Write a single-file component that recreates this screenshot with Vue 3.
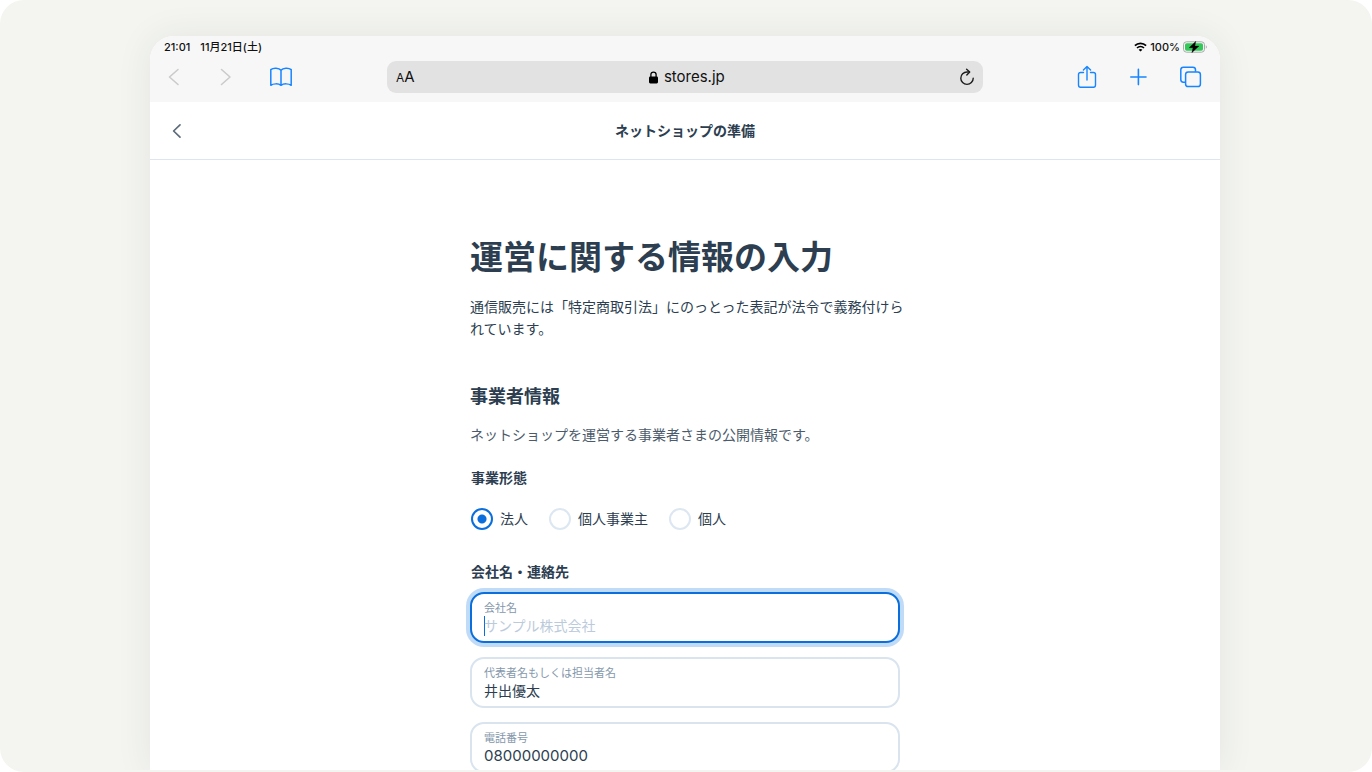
<script setup>
import { ref } from 'vue'

const businessType = ref('corporation')
const businessTypes = [
  { value: 'corporation', label: '法人' },
  { value: 'sole', label: '個人事業主' },
  { value: 'individual', label: '個人' },
]

const activeField = ref('company')
const fields = ref([
  { id: 'company', label: '会社名', value: '', placeholder: 'サンプル株式会社' },
  { id: 'person', label: '代表者名もしくは担当者名', value: '井出優太', placeholder: '' },
  { id: 'phone', label: '電話番号', value: '08000000000', placeholder: '' },
])
</script>

<template>
  <div class="canvas">
    <div class="stage">
      <div class="device">
        <header class="browser">
          <div class="status">
            <div class="status-group">
              <span>21:01</span>
              <span>11月21日(土)</span>
            </div>
            <div class="status-right">
              <svg width="13" height="10" viewBox="0 0 13 10" fill="none" stroke="#000" stroke-width="1.7">
                <path d="M0.9 3.7C4 0.5 9 0.5 12.1 3.7" />
                <path d="M3 6C5 4.1 8 4.1 10 6" />
                <path d="M6.5 9.6L4.6 7.7C5.6 6.8 7.4 6.8 8.4 7.7Z" fill="#000" stroke="none" />
              </svg>
              <span>100%</span>
              <svg width="25" height="12" viewBox="0 0 25 12">
                <rect x="0.5" y="0.8" width="21" height="10.4" rx="3" fill="#f7f7f7" stroke="#a9a9a9" />
                <rect x="2" y="2.3" width="18" height="7.4" rx="1.6" fill="#34c759" />
                <path d="M22.8 4.2C24.2 4.8 24.2 7.2 22.8 7.8Z" fill="#a9a9a9" />
                <path d="M12.8 0.2L6.2 6.7H10L8.8 11.8L16 5.1H11.9Z" fill="#000" stroke="#000" stroke-width="0.3" />
              </svg>
            </div>
          </div>
          <div class="toolbar">
            <nav class="tools">
              <button class="tool" type="button" aria-label="戻る">
                <svg width="12" height="18" viewBox="0 0 12 18" fill="none" stroke="#cbcbcc" stroke-width="1.6" stroke-linecap="round" stroke-linejoin="round"><path d="M10 1.5L1.5 9L10 16.5" /></svg>
              </button>
              <button class="tool" type="button" aria-label="進む">
                <svg width="12" height="18" viewBox="0 0 12 18" fill="none" stroke="#cbcbcc" stroke-width="1.6" stroke-linecap="round" stroke-linejoin="round"><path d="M1.5 1.5L10 9L1.5 16.5" /></svg>
              </button>
              <button class="tool tool-wide" type="button" aria-label="ブックマーク">
                <svg width="24" height="20" viewBox="0 0 24 20" fill="none" stroke="#1785ff" stroke-width="1.5" stroke-linecap="round" stroke-linejoin="round">
                  <path d="M12 18.3V3.2C10 0.6 4.2 0.6 1.8 2.6V18.3C4.2 16.5 9.4 16.3 12 18.3C14.6 16.3 19.8 16.5 22.2 18.3V2.6C19.8 0.6 14 0.6 12 3.2" />
                </svg>
              </button>
            </nav>
            <div class="address">
              <button class="text-size" type="button" aria-label="表示サイズ"><span class="small-a">A</span>A</button>
              <div class="host">
                <svg width="9" height="13" viewBox="0 0 9 13">
                  <rect x="0" y="5.4" width="9" height="7" rx="1.3" fill="#000" />
                  <path d="M1.9 6V3.6C1.9 0.4 7.1 0.4 7.1 3.6V6" fill="none" stroke="#000" stroke-width="1.3" />
                </svg>
                <span>stores.jp</span>
              </div>
              <button class="reload" type="button" aria-label="再読み込み">
                <svg width="16" height="18" viewBox="0 0 16 18" fill="none" stroke="#1c1c1c" stroke-width="1.4" stroke-linecap="round" stroke-linejoin="round">
                  <path d="M14.2 10.2A6.2 6.2 0 1 1 8 4H10.2" />
                  <path d="M7.6 1.2L10.7 4L7.8 7" />
                </svg>
              </button>
            </div>
            <nav class="tools">
              <button class="tool" type="button" aria-label="共有">
                <svg width="20" height="24" viewBox="0 0 20 24" fill="none" stroke="#1785ff" stroke-width="1.4" stroke-linecap="round" stroke-linejoin="round">
                  <path d="M6.5 7.5H3.6Q1.5 7.5 1.5 9.6V20Q1.5 22.2 3.6 22.2H16.4Q18.5 22.2 18.5 20V9.6Q18.5 7.5 16.4 7.5H13.5" />
                  <path d="M10 15V1.8M6.4 5L10 1.6L13.6 5" />
                </svg>
              </button>
              <button class="tool" type="button" aria-label="新規タブ">
                <svg width="18" height="18" viewBox="0 0 18 18" fill="none" stroke="#1785ff" stroke-width="1.6" stroke-linecap="round"><path d="M8.4 1.4V16.6M0.8 9H16" /></svg>
              </button>
              <button class="tool" type="button" aria-label="タブ一覧">
                <svg width="22" height="22" viewBox="0 0 22 22" fill="none" stroke="#1785ff" stroke-width="1.5" stroke-linejoin="round">
                  <rect x="5.6" y="6" width="14.8" height="14.6" rx="2.6" />
                  <path d="M5.4 16.2H3.4Q0.8 16.2 0.8 13.6V3.8Q0.8 1.2 3.4 1.2H12.9Q15.5 1.2 15.5 3.8V5.8" />
                </svg>
              </button>
            </nav>
          </div>
        </header>

        <div class="page-head">
          <button class="page-back" type="button" aria-label="前の画面へ">
            <svg width="10" height="16" viewBox="0 0 10 16" fill="none" stroke="#5d6b79" stroke-width="1.7" stroke-linecap="round" stroke-linejoin="round"><path d="M8 1.8L1.6 8L8 14.2" /></svg>
          </button>
          <p class="page-name">ネットショップの準備</p>
        </div>

        <main class="content">
          <h1>運営に関する情報の入力</h1>
          <p class="lead">通信販売には「特定商取引法」にのっとった表記が法令で義務付けられています。</p>
          <h2>事業者情報</h2>
          <p class="note">ネットショップを運営する事業者さまの公開情報です。</p>

          <h3 id="type-title">事業形態</h3>
          <div class="radios" role="radiogroup" aria-labelledby="type-title">
            <label v-for="t in businessTypes" :key="t.value" class="radio">
              <input v-model="businessType" type="radio" name="business-type" :value="t.value" />
              <span>{{ t.label }}</span>
            </label>
          </div>

          <h3 class="contact-title">会社名・連絡先</h3>
          <div class="fields">
            <div v-for="f in fields" :key="f.id" class="field" :class="{ active: f.id === activeField }">
              <label :for="f.id">{{ f.label }}</label>
              <input :id="f.id" v-model="f.value" type="text" :placeholder="f.placeholder" @focus="activeField = f.id" />
            </div>
          </div>
        </main>
      </div>
    </div>
  </div>
</template>

<style>
body {
  margin: 0;
  background: #fff;
}
</style>

<style scoped>
.canvas {
  box-sizing: border-box;
  height: 100vh;
  padding-bottom: 2px;
  overflow: hidden;
  border-radius: 24px;
  background: #f4f5f0;
  color: #2c3e50;
  font-family: Inter, "Noto Sans CJK JP", sans-serif;
  font-size: 14px;
  line-height: 22px;
}
.stage {
  box-sizing: border-box;
  height: 100%;
  padding: 36px 152px 0 150px;
  overflow: hidden;
}
.device {
  min-height: 100%;
  overflow: hidden;
  border-radius: 24px 24px 0 0;
  background: #fff;
  box-shadow: 0 0 36px rgba(40, 50, 50, 0.08);
}
h1,
h2,
h3,
p {
  margin: 0;
}
button {
  display: flex;
  align-items: center;
  justify-content: center;
  padding: 0;
  border: 0;
  background: none;
  color: inherit;
  font: inherit;
}
.browser {
  height: 66px;
  background: #f7f7f7;
  color: #111;
}
.status {
  display: flex;
  justify-content: space-between;
  align-items: center;
  height: 22px;
  padding: 0 12px 0 14px;
  font-size: 11px;
  font-weight: 500;
  line-height: 22px;
}
.status-group {
  display: flex;
  gap: 10px;
}
.status-right {
  display: flex;
  align-items: center;
  gap: 3px;
}
.toolbar {
  display: flex;
  align-items: center;
  height: 38px;
  padding: 0 13px 0 8px;
}
.tools {
  display: flex;
  gap: 20px;
}
.tool {
  width: 32px;
  height: 32px;
}
.tool-wide {
  width: 38px;
}
.address {
  display: flex;
  flex: 1;
  align-items: center;
  justify-content: space-between;
  height: 32px;
  margin: 0 88px 0 87px;
  padding: 0 8px 0 9px;
  border-radius: 9px;
  background: #e2e2e3;
  font-size: 15px;
}
.text-size {
  align-items: baseline;
  font-size: 15px;
}
.small-a {
  font-size: 12px;
}
.host {
  display: flex;
  align-items: center;
  gap: 6px;
}
.page-head {
  display: grid;
  grid-template-columns: 1fr auto 1fr;
  align-items: center;
  height: 57px;
  padding: 0 16px;
  border-bottom: 1px solid #dde6f0;
}
.page-back {
  width: 22px;
  height: 32px;
}
.page-name {
  font-weight: 700;
}
.content {
  width: 430px;
  margin: 0 auto;
  padding-top: 73px;
}
h1 {
  font-size: 33px;
  line-height: 48px;
  white-space: nowrap;
}
.lead {
  margin: 15px -8px 0 0;
}
h2 {
  margin-top: 44px;
  font-size: 18px;
  line-height: 26px;
}
.note {
  margin-top: 14px;
  color: #4c5b6b;
}
h3 {
  margin-top: 21px;
  padding-left: 1px;
  font-size: 14px;
}
.radios {
  display: flex;
  gap: 21px;
  margin-top: 19px;
  padding-left: 1px;
}
.radio {
  display: flex;
  align-items: center;
  gap: 7px;
}
.radio input {
  appearance: none;
  box-sizing: border-box;
  width: 22px;
  height: 22px;
  margin: 0;
  border: 2px solid #dde7f1;
  border-radius: 50%;
  background: #fff;
}
.radio input:checked {
  border-color: #0a6fdc;
  background: radial-gradient(circle, #0a6fdc 4px, #fff 5px);
}
.contact-title {
  margin-top: 31px;
}
.fields {
  display: grid;
  gap: 14px;
  margin-top: 9px;
}
.field {
  display: flex;
  flex-direction: column;
  padding: 6px 12px 5px;
  border: 2px solid #d9e4ef;
  border-radius: 14px;
  background: #fff;
}
.field.active {
  border-color: #0a6fdc;
  box-shadow: 0 0 0 4px #c0dbf7;
}
.field label {
  color: #8598ac;
  font-size: 11px;
  line-height: 16px;
}
.field input {
  height: 20px;
  padding: 0;
  border: 0;
  outline: 0;
  background: none;
  color: #2c3e50;
  font-family: inherit;
  font-size: 14px;
  line-height: 20px;
}
.field input#phone {
  font-size: 15px;
}
.field input::placeholder {
  color: #bccbdb;
  opacity: 1;
}
.field.active input {
  background: linear-gradient(#0a6fdc, #0a6fdc) left / 1px 100% no-repeat;
}
</style>
